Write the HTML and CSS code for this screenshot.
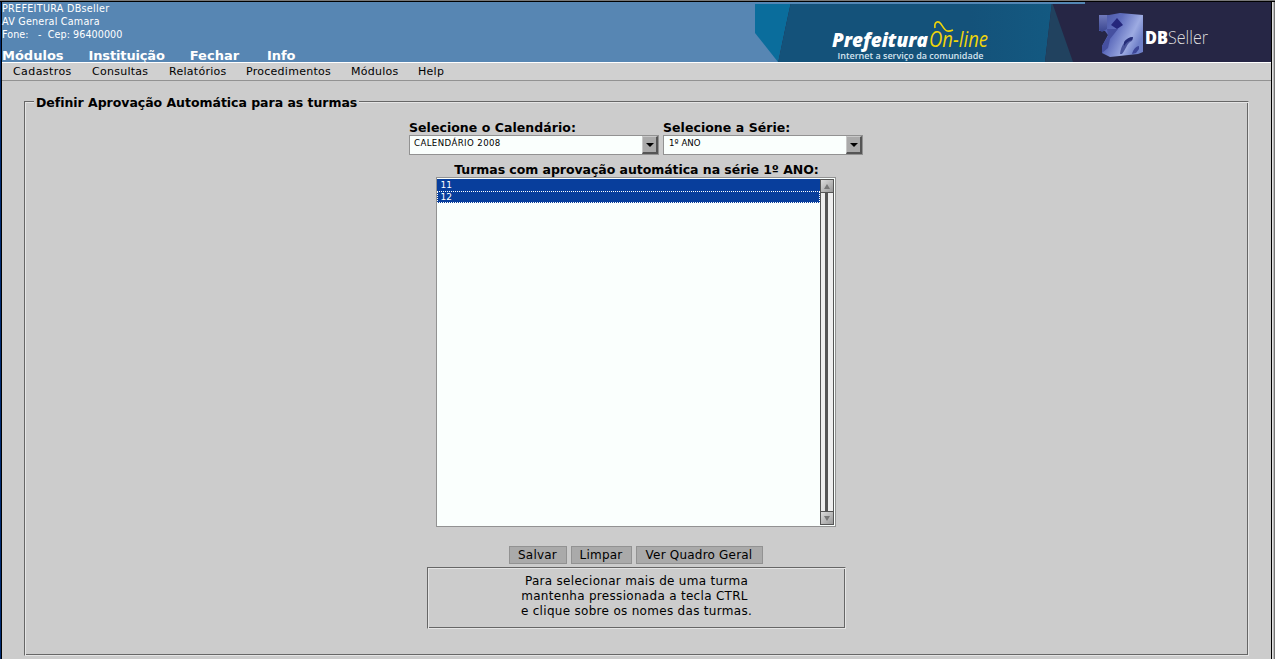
FILE: index.html
```html
<!DOCTYPE html>
<html lang="pt-BR">
<head>
<meta charset="utf-8">
<title>DBSeller - Prefeitura On-line</title>
<link rel="stylesheet" href="styles.css">
</head>
<body>
<div class="window">
  <header class="header">
    <div class="header-left">
      <div class="address"><div class="org">PREFEITURA DBseller</div><div class="street">AV General Camara</div><div class="phone">Fone: &nbsp; - &nbsp;Cep: 96400000</div></div>
      <nav class="main-nav"><a>Módulos</a><a class="institution">Instituição</a><a>Fechar</a><a class="info">Info</a></nav>
    </div>
    <svg class="banner" width="516" height="60" viewBox="755 2 516 60">
      <defs>
        <linearGradient id="cube" x1="0" y1="0" x2="1" y2="0.5">
          <stop offset="0" stop-color="#4653a0"/><stop offset="0.45" stop-color="#5f6dbd"/><stop offset="0.8" stop-color="#9dabe2"/><stop offset="1" stop-color="#6f80c8"/>
        </linearGradient>
        <linearGradient id="arm" x1="0" y1="0" x2="0" y2="1">
          <stop offset="0" stop-color="#6f79bb"/><stop offset="1" stop-color="#39458f"/>
        </linearGradient>
        <linearGradient id="sea" x1="0" y1="0" x2="1" y2="0">
          <stop offset="0" stop-color="#14527a"/><stop offset="0.7" stop-color="#14527a"/><stop offset="1" stop-color="#135981"/>
        </linearGradient>
      </defs>
      <path d="M790 2H1271V62H778Z" fill="#262645"/>
      <path d="M755 2H791L778 62L755 33Z" fill="#0a6d9c"/>
      <path d="M791 2H1052L1045 62H778Z" fill="url(#sea)"/>
      <path d="M1052 2L1073 62H1045Z" fill="#21425f"/>
      <path d="M755 2H1085V4H755Z" fill="#5487b5"/>
      <text class="brand" x="832" y="47" textLength="96" lengthAdjust="spacingAndGlyphs">Prefeitura</text>
      <text class="online" x="929" y="47" textLength="59" lengthAdjust="spacingAndGlyphs">On-line</text>
      <path d="M935 28C934 22 938 20 941 24C945 30 946 33 953 30" fill="none" stroke="#f0d50a" stroke-width="1.6"/>
      <text class="tagline" x="837.5" y="58.500" textLength="146" lengthAdjust="spacingAndGlyphs">Internet a serviço da comunidade</text>
      <path d="M1109 15L1120 13L1143 15V52L1138 54L1110 57L1102 53L1102 46L1108 35L1105 31L1099 31V15Z" fill="url(#cube)"/>
      <path d="M1099 15L1107 15V29L1102 32L1099 30Z" fill="url(#arm)"/>
      <path d="M1117 18L1123 25L1117 29L1111 25Z" fill="#25277c"/>
      <path d="M1107 29H1118L1110 39L1108 48L1102 53L1102 46L1108 36Z" fill="#4650a0"/>
      <path d="M1120 54C1121 45 1126 38 1133 37C1133 40 1132 41 1130 42C1127 44 1126 49 1122 54Z" fill="#303985" fill-opacity="0.75"/>
      <path d="M1124 42C1126 39 1129 37 1133 37L1132 40C1128 41 1126 43 1124 46Z" fill="#252d79"/>
      <path d="M1132 54C1133 50 1136 46 1139 46L1139 49L1136 53Z" fill="#3d4798"/>
      <text class="db" x="1145" y="43.500" textLength="23" lengthAdjust="spacingAndGlyphs">DB</text>
      <text class="seller" x="1168" y="43.500" textLength="40" lengthAdjust="spacingAndGlyphs">Seller</text>
    </svg>
  </header>
  <nav class="menu"><a>Cadastros</a><a>Consultas</a><a>Relatórios</a><a>Procedimentos</a><a>Módulos</a><a>Help</a></nav>
  <main class="content">
    <section class="panel">
      <h1 class="panel-title">Definir Aprovação Automática para as turmas</h1>
      <div class="filters">
        <div class="field field-calendar">
          <div class="label">Selecione o Calendário:</div>
          <div class="select"><span>CALENDÁRIO 2008</span><i class="drop"><svg width="8" height="4"><path d="M0 0H8L4 4Z"/></svg></i></div>
        </div>
        <div class="field field-grade">
          <div class="label">Selecione a Série:</div>
          <div class="select grade"><span>1º ANO</span><i class="drop"><svg width="8" height="4"><path d="M0 0H8L4 4Z"/></svg></i></div>
        </div>
      </div>
      <div class="list-title">Turmas com aprovação automática na série 1º ANO:</div>
      <div class="list">
        <div class="options"><div class="option">11</div><div class="option focused">12</div></div>
        <div class="scrollbar">
          <i class="arrow"><svg width="6" height="5"><path d="M3 0L6 5H0Z"/></svg></i>
          <div class="track"></div>
          <i class="arrow"><svg width="6" height="5"><path d="M0 0H6L3 5Z"/></svg></i>
        </div>
      </div>
      <div class="buttons"><button class="save">Salvar</button><button class="clear">Limpar</button><button class="overview">Ver Quadro Geral</button></div>
      <div class="hint"><p>Para selecionar mais de uma turma</p><p class="second">mantenha pressionada a tecla CTRL</p><p>e clique sobre os nomes das turmas.</p></div>
    </section>
  </main>
</div>
</body>
</html>
```
FILE: styles.css
```css
* { box-sizing: border-box; }
body {
  margin: 0;
  height: 659px;
  overflow: hidden;
  font-family: "DejaVu Sans", sans-serif;
  color: #000;
}
.window {
  width: 1275px;
  height: 659px;
  padding: 2px 4px 0 2px;
  background:
    linear-gradient(#777 0 1px, #000 1px 2px) 0 0 / 100% 2px no-repeat,
    linear-gradient(to right, #002b72 0 1px, #000 1px 2px, #ccc 2px 1271px, #000 1271px 1272px, #e0e0e0 1272px 1273px, #bbb 1273px 1274px, #777 1274px);
}
.header { display: flex; justify-content: space-between; height: 60px; background: #5786b3; }
.header-left { display: flex; flex-direction: column; justify-content: space-between; }
.address { font-size: 9.6px; line-height: 13px; color: #fff; }
.org { letter-spacing: 0.3px; }
.street { letter-spacing: 0.22px; }
.phone { letter-spacing: 0.07px; }
.main-nav { display: flex; font-weight: bold; font-size: 13px; line-height: 13px; color: #fff; }
.main-nav a { margin-right: 25px; }
.main-nav .institution { letter-spacing: -0.15px; }
.main-nav .info { margin-left: 3px; letter-spacing: -0.1px; }
.banner { display: block; }
.brand { font: italic 800 20px "Open Sans", sans-serif; fill: #fff; }
.online { font: italic 400 21px "Open Sans", sans-serif; fill: #f0d50a; }
.tagline { font: 600 9.5px "Open Sans", sans-serif; fill: #d5e4ef; }
.db { font: 800 17px "Open Sans", sans-serif; fill: #fff; }
.seller { font: 300 18px "Open Sans", sans-serif; fill: #ddd; }
.menu {
  display: flex;
  gap: 20px;
  height: 19px;
  padding-left: 11px;
  border-top: 1px solid #fff;
  border-bottom: 1px solid #929292;
  background: #d0d0d0;
  font-size: 11px;
  line-height: 17px;
  letter-spacing: 0.27px;
}
.menu a { width: 59px; white-space: nowrap; }
.menu a:nth-child(2) { width: 57px; }
.menu a:nth-child(3) { width: 57px; }
.menu a:nth-child(4) { width: 85px; }
.menu a:nth-child(5) { width: 47px; }
.menu a:nth-child(1) { letter-spacing: 0.42px; }
.content { padding: 20px 22px 0; }
.panel {
  display: flex;
  flex-direction: column;
  align-items: center;
  width: 1225px;
  height: 555px;
  border: 1px solid #666;
  border-right-color: #e5e5e5;
  border-bottom-color: #e5e5e5;
  box-shadow: inset 1px 1px #e5e5e5, inset -1px -1px #666;
}
.panel-title { align-self: flex-start; margin: -8px 0 0 9px; padding: 0 2px; background: #ccc; font-size: 12.500px; line-height: 18px; letter-spacing: -0.03px; white-space: nowrap; }
.filters { display: flex; gap: 4px; margin-top: 8px; margin-right: 1px; }
.field-calendar { width: 250px; }
.field-grade { width: 200px; }
.label { font-weight: bold; font-size: 12.500px; line-height: 16px; height: 15px; letter-spacing: 0.05px; white-space: nowrap; }
.select { display: flex; justify-content: space-between; height: 20px; border: 1px solid #929292; background: #fafffd; }
.select span { padding-left: 4px; font-size: 8.600px; line-height: 14px; letter-spacing: 0.4px; }
.select.grade span { padding-left: 5px; letter-spacing: 0.05px; }
.drop { display: flex; align-items: center; justify-content: center; width: 16px; background: #aaa; border: 1px solid #c8c8c8; border-right: 2px solid #555; border-bottom: 2px solid #555; }
.list-title { margin-top: 7px; font-weight: bold; font-size: 12.500px; line-height: 15px; letter-spacing: -0.05px; }
.list { display: flex; width: 400px; height: 350px; margin-right: 2px; border: 1px solid #929292; background: #fafffd; padding: 1px 1px 1px 0; }
.options { flex: 1; }
.option { height: 12px; padding-left: 4px; background: #083e9c; color: #fff; font-size: 9px; line-height: 12px; }
.focused { outline: 1px dotted #fff; outline-offset: -1px; }
.scrollbar { display: flex; flex-direction: column; width: 14px; border: 1px solid #555; background: #555; }
.arrow { display: flex; align-items: center; justify-content: center; height: 12px; background: linear-gradient(135deg, #ddd, #999); fill: #777; }
.track { flex: 1; border: solid #555; border-width: 1px 0; background: linear-gradient(to right, #eee 0 4px, #555 4px 7px, #eee 7px); }
.buttons { display: flex; gap: 4px; margin: 19px 2px 0 0; height: 18px; }
button { padding: 0; border: 1px solid #929292; background: #aaa; color: #000; font: 12px/16px "DejaVu Sans", sans-serif; letter-spacing: 0.2px; }
.save { width: 58px; }
.clear { width: 61px; }
.overview { width: 127px; }
.hint { width: 419px; height: 62px; margin-top: 3px; padding-top: 6px; border: 1px solid #666; border-right-color: #e5e5e5; border-bottom-color: #e5e5e5; box-shadow: inset 1px 1px #e5e5e5, inset -1px -1px #666; font-size: 12px; line-height: 15px; letter-spacing: 0.3px; text-align: center; }
.hint p { margin: 0; }
.hint .second { margin-right: 4px; }
```
